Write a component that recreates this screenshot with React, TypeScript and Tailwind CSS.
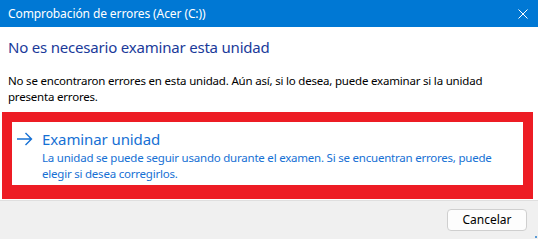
import React from 'react';

const font = { fontFamily: '"Segoe UI", "Noto Sans", sans-serif' };

export default function App() {
  return (
    <div className="w-[538px] h-[239px] flex flex-col bg-white overflow-hidden" style={font}>
      {/* title bar */}
      <div className="h-[27px] shrink-0 bg-[#0078d4] flex items-center pl-2 pr-[10px]">
        <span className="text-white text-[12px] leading-none tracking-[-0.1px]">Comprobación de errores (Acer (C:))</span>
        <svg className="ml-auto" width="10" height="10" viewBox="0 0 10 10">
          <path d="M0.5 0.5 L9.5 9.5 M9.5 0.5 L0.5 9.5" stroke="#fff" strokeWidth="1" />
        </svg>
      </div>

      <div className="flex-1 flex flex-col">
        <h1 className="pl-2 pt-[9px] text-[15px] leading-[22px] text-[#1a3a9a] font-normal tracking-[-0.2px]">
          No es necesario examinar esta unidad
        </h1>

        <p className="pl-2 mt-[15px] text-[11.5px] leading-[16px] text-black tracking-[-0.2px] whitespace-nowrap">
          No se encontraron errores en esta unidad. Aún así, si lo desea, puede examinar si la unidad
          <br />
          presenta errores.
        </p>

        <div className="ml-[2px] mt-[7px] w-[531px] border-[#ed1c24] border-t-[10px] border-x-[10px] border-b-[14px]">
          <div className="flex pl-1 pt-[7px] pb-[3px]">
            <svg className="mt-[3px] shrink-0" width="17" height="14" viewBox="0 0 17 14">
              <path d="M1 7 H15.5 M9.5 1 L15.5 7 L9.5 13" fill="none" stroke="#1670d4" strokeWidth="1.4" />
            </svg>
            <div className="ml-[9px] flex flex-col">
              <span className="text-[15px] leading-[20px] text-[#1670d4] tracking-[-0.1px]">Examinar unidad</span>
              <span className="mt-[1px] text-[11.5px] leading-[16px] text-[#1670d4] tracking-[-0.22px] whitespace-nowrap">
                La unidad se puede seguir usando durante el examen. Si se encuentran errores, puede
                <br />
                elegir si desea corregirlos.
              </span>
            </div>
          </div>
        </div>

        <div className="mt-auto h-[39px] bg-[#f0f0f0] border-t border-[#dfdfdf] flex items-center justify-end pr-[11px] relative">
          <button className="w-[80px] h-[22px] rounded-[4px] border border-[#cfcfcf] bg-[#fdfdfd] text-[12px] text-black leading-none">
            Cancelar
          </button>
          <span className="absolute right-[1px] bottom-[1px] w-[2px] h-[2px] bg-[#5b9bd5]" />
        </div>
      </div>
    </div>
  );
}
